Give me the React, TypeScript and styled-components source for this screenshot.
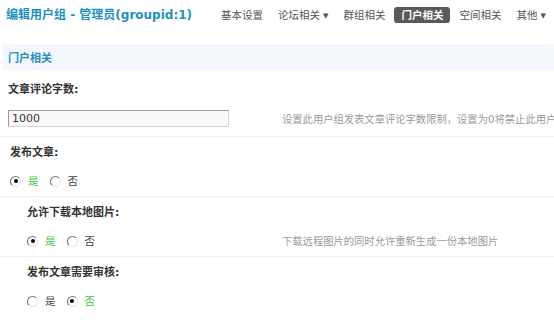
import React from "react";
import styled, { createGlobalStyle } from "styled-components";

const Global = createGlobalStyle`
  html, body { margin: 0; padding: 0; background: #fff; }
  body {
    width: 554px; height: 320px; overflow: hidden;
    font-family: "DejaVu Sans", "Noto Sans CJK SC", sans-serif;
    color: #333;
  }
`;

const Page = styled.div`
  width: 554px;
  overflow: hidden;
`;

const Header = styled.div`
  display: flex;
  align-items: center;
  height: 30px;
  padding-left: 6px;
`;

const Title = styled.h3`
  flex: 0 0 209px;
  margin: 0;
  font-size: 12px;
  font-weight: bold;
  color: #1e8fc3;
  white-space: nowrap;
  line-height: 16px;
`;

const Nav = styled.ul`
  display: flex;
  align-items: center;
  gap: 3px;
  margin: 0;
  padding: 0;
  list-style: none;
`;

const NavItem = styled.li<{ $active?: boolean }>`
  height: 16px;
  line-height: 16px;
  padding: 0 ${(p) => (p.$active ? 7 : 6)}px;
  font-size: 10.5px;
  white-space: nowrap;
  border-radius: 3px;
  color: ${(p) => (p.$active ? "#fff" : "#555")};
  background: ${(p) => (p.$active ? "#5a5a5a" : "transparent")};
  font-weight: ${(p) => (p.$active ? "bold" : "normal")};
`;

const Caret = styled.span`
  font-size: 7px;
  margin-left: 3px;
  vertical-align: 1px;
`;

const Partition = styled.div`
  margin: 14px 0 0 3px;
  height: 26px;
  box-sizing: border-box;
  padding: 5px 0 0 5px;
  line-height: 20px;
  background: linear-gradient(#f1f7fc, #f5f9fd);
  color: #1e8fc3;
  font-size: 11px;
  font-weight: bold;
`;

const Settings = styled.div`
  margin-top: 4px;
`;

const Block = styled.div<{ $indent: number; $bottom: number }>`
  padding: 8px 0 ${(p) => p.$bottom}px ${(p) => p.$indent}px;
  border-bottom: 1px solid #f2f2f2;
  &:last-child { border-bottom: none; }
`;

const Label = styled.div`
  font-size: 11px;
  font-weight: bold;
  line-height: 16px;
  color: #333;
  white-space: nowrap;
`;

const ValueRow = styled.div<{ $col: number }>`
  display: grid;
  grid-template-columns: ${(p) => p.$col}px minmax(0, 1fr);
  align-items: center;
  margin-top: 12px;
`;

const TextInput = styled.input`
  box-sizing: border-box;
  width: 221px;
  height: 17px;
  margin: 0;
  padding: 0 3px;
  border: 1px solid;
  border-color: #9a9a9a #d4d4d4 #d4d4d4 #9a9a9a;
  background: #fafafa;
  font-family: "DejaVu Sans", sans-serif;
  font-size: 11px;
  color: #333;
  outline: none;
`;

const Hint = styled.div`
  font-size: 10.3px;
  color: #9a9a9a;
  white-space: nowrap;
  overflow: hidden;
  line-height: 16px;
`;

const Radios = styled.div`
  display: flex;
  align-items: center;
  height: 16px;
`;

const Option = styled.label`
  display: flex;
  align-items: center;
  margin-right: 11px;
`;

const RadioMark = styled.span<{ $checked?: boolean }>`
  position: relative;
  box-sizing: border-box;
  width: 11px;
  height: 11px;
  border-radius: 50%;
  border: 1px solid;
  border-color: #6e6e6e #e6e6e6 #e6e6e6 #6e6e6e;
  background: #fff;
  margin-right: 7px;
  &::after {
    content: "";
    display: ${(p) => (p.$checked ? "block" : "none")};
    position: absolute;
    left: 2.5px;
    top: 2.5px;
    width: 4px;
    height: 4px;
    border-radius: 50%;
    background: #000;
  }
`;

const OptionText = styled.span<{ $checked?: boolean }>`
  font-size: 10.5px;
  line-height: 16px;
  color: ${(p) => (p.$checked ? "#3ccc3c" : "#444")};
`;

const HINT_X = 282;

type YesNoProps = { yes: boolean };
const YesNo = ({ yes }: YesNoProps) => (
  <Radios>
    <Option>
      <RadioMark $checked={yes} />
      <OptionText $checked={yes}>是</OptionText>
    </Option>
    <Option>
      <RadioMark $checked={!yes} />
      <OptionText $checked={!yes}>否</OptionText>
    </Option>
  </Radios>
);

export default function App() {
  return (
    <Page>
      <Global />
      <Header>
        <Title>编辑用户组 - 管理员(groupid:1)</Title>
        <Nav>
          <NavItem>基本设置</NavItem>
          <NavItem>
            论坛相关<Caret>▼</Caret>
          </NavItem>
          <NavItem>群组相关</NavItem>
          <NavItem $active>门户相关</NavItem>
          <NavItem>空间相关</NavItem>
          <NavItem>
            其他<Caret>▼</Caret>
          </NavItem>
        </Nav>
      </Header>
      <Partition>门户相关</Partition>
      <Settings>
        <Block $indent={8} $bottom={9}>
          <Label>文章评论字数:</Label>
          <ValueRow $col={HINT_X - 8}>
            <TextInput defaultValue="1000" />
            <Hint>设置此用户组发表文章评论字数限制，设置为0将禁止此用户发表评论</Hint>
          </ValueRow>
        </Block>
        <Block $indent={10} $bottom={7}>
          <Label>发布文章:</Label>
          <ValueRow $col={HINT_X - 10}>
            <YesNo yes />
            <Hint />
          </ValueRow>
        </Block>
        <Block $indent={27} $bottom={7}>
          <Label>允许下载本地图片:</Label>
          <ValueRow $col={HINT_X - 27}>
            <YesNo yes />
            <Hint>下载远程图片的同时允许重新生成一份本地图片</Hint>
          </ValueRow>
        </Block>
        <Block $indent={27} $bottom={7}>
          <Label>发布文章需要审核:</Label>
          <ValueRow $col={HINT_X - 27}>
            <YesNo yes={false} />
            <Hint />
          </ValueRow>
        </Block>
      </Settings>
    </Page>
  );
}
